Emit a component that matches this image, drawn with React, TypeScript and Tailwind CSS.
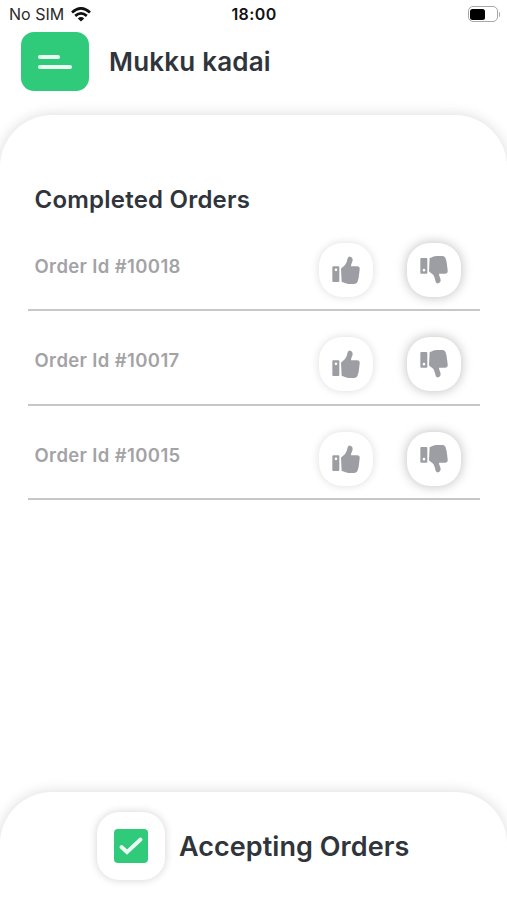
import { useState } from "react"

interface Order {
  id: number
}

const orders: Order[] = [{ id: 10018 }, { id: 10017 }, { id: 10015 }]

function ThumbIcon({ className }: { className?: string }) {
  return (
    <svg viewBox="0 0 84 84" className={className} fill="currentColor">
      <path
        fillRule="evenodd"
        d="M4 31h15q3 0 3 3v41q0 3-3 3H4q-3 0-3-3V34q0-3 3-3ZM12 37.5a4 4 0 1 0 0 8a4 4 0 1 0 0-8Z"
      />
      <path d="M27 39q0-3 3-4q10-5 14-17l3-11q2-6 8-5q7 2 7 9q0 5-3 11q-2 4-2 9h18q9 0 8 9q0 4-1 8q0 4-1 8q0 4-1 8q0 4-2 8q-1 11-11 12q-22 2-34-5l-4-1Z" />
    </svg>
  )
}

function WifiIcon() {
  return (
    <svg viewBox="0 0 20 15" className="h-[15px] w-5" fill="none" stroke="#111" strokeWidth="2.7">
      <path d="M1 5.4Q10-2.6 19 5.4" />
      <path d="M4.2 8.9Q10 4 15.8 8.9" />
      <path d="M10 14.4L6.8 11.4Q10 8.6 13.2 11.4Z" fill="#111" stroke="none" />
    </svg>
  )
}

function StatusBar() {
  return (
    <div className="grid h-[29px] shrink-0 grid-cols-3 items-center pr-[7px] pb-px pl-[9px] font-['Inter'] text-[#111]">
      <div className="flex items-center gap-[7px]">
        <span className="text-[16px] whitespace-nowrap text-[#2a2a2a]">No SIM</span>
        <WifiIcon />
      </div>
      <span className="pr-px text-center text-[16px] font-semibold tracking-[0.4px]">18:00</span>
      <div className="flex items-center justify-end gap-px">
        <div className="h-4 w-[30px] rounded-[5px] border-[1.5px] border-[#a8a8a8] p-[1.5px]">
          <div className="h-full w-[15px] rounded-[2.5px] bg-black" />
        </div>
        <div className="h-[5px] w-[1.5px] rounded-r bg-[#a8a8a8]" />
      </div>
    </div>
  )
}

function OrderRow({ order }: { order: Order }) {
  return (
    <div className="flex h-[94.3px] items-start border-b-2 border-[#c7c7c9] pr-[18.5px] pl-[7px]">
      <span className="mt-[37px] text-[18.5px] leading-6 font-semibold tracking-[0.37px] text-[#a3a3a6]">
        Order Id #{order.id}
      </span>
      <div className="mt-[26px] ml-auto flex gap-[34px]">
        <button className="flex size-[54px] items-center justify-center rounded-[23px] bg-white text-[#9d9ea4] shadow-[0_0_9px_rgba(0,0,0,0.14)]">
          <ThumbIcon className="size-7" />
        </button>
        <button className="flex size-[54px] items-center justify-center rounded-[23px] bg-white text-[#9d9ea4] shadow-[0_0_12px_rgba(0,0,0,0.27)]">
          <ThumbIcon className="size-7 -scale-y-100" />
        </button>
      </div>
    </div>
  )
}

export default function App() {
  const [accepting, setAccepting] = useState(true)

  return (
    <div className="flex h-[900px] w-[507px] flex-col overflow-hidden bg-white font-['Inter',sans-serif] text-[#30343b]">
      <StatusBar />
      <header className="flex h-[86px] shrink-0 items-start pt-[3px] pl-[21px]">
        <button className="flex h-[59px] w-[68px] flex-col justify-center gap-[6px] rounded-[13px] bg-[#2fcb7a] pl-[17px]">
          <span className="h-[4px] w-[22px] rounded-full bg-[#e9fff3]" />
          <span className="h-[4px] w-[34px] rounded-full bg-[#e9fff3]" />
        </button>
        <h1 className="ml-5 text-[26px] leading-[59px] font-semibold tracking-[0.2px]">Mukku kadai</h1>
      </header>

      {/* runs on under the footer so its rounded corners sit on plain white */}
      <main className="-mb-[108px] min-h-0 flex-1 rounded-t-[52px] bg-white px-[27.5px] pt-[69px] shadow-[0_0_14px_rgba(0,0,0,0.15)]">
        <h2 className="pl-[7px] text-[24px] leading-8 font-semibold tracking-[0.22px]">Completed Orders</h2>
        <div className="mt-px flex flex-col">
          {orders.map((order) => (
            <OrderRow key={order.id} order={order} />
          ))}
        </div>
      </main>

      <footer className="relative flex h-[108px] shrink-0 items-center rounded-t-[52px] bg-white pl-[97px] shadow-[0_0_14px_rgba(0,0,0,0.15)]">
        <button
          onClick={() => setAccepting(!accepting)}
          className="flex size-[68px] items-center justify-center rounded-[22px] bg-white shadow-[0_0_9px_rgba(0,0,0,0.18)]"
        >
          <span className="flex size-[34px] items-center justify-center rounded-[4px] bg-[#2fcb7a]">
            {accepting && (
              <svg viewBox="0 0 24 18" className="h-[18px] w-6" fill="none" stroke="#effff6" strokeWidth="3.8" strokeLinecap="round">
                <path d="M2.5 10L8 15.2L21.5 2.5" />
              </svg>
            )}
          </span>
        </button>
        <span className="mt-[2px] ml-[14px] text-[27px] font-semibold tracking-[0.05px]">Accepting Orders</span>
      </footer>
    </div>
  )
}
